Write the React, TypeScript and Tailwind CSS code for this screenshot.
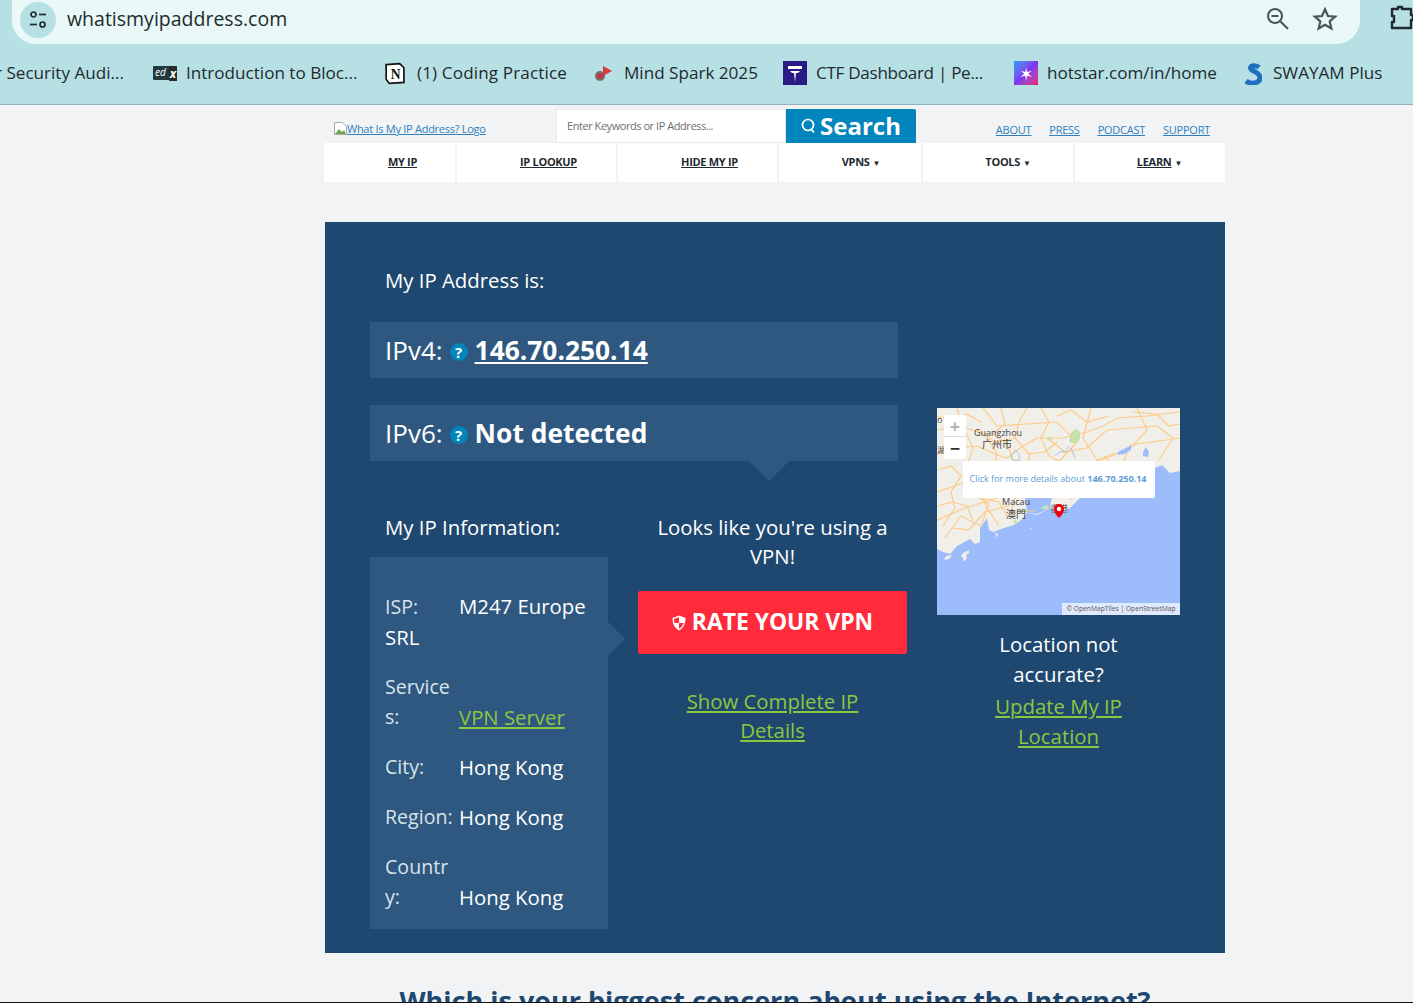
import React from "react";

function Bookmark({ icon, label, w, cls = "" }: { icon: React.ReactNode; label: string; w: string; cls?: string }) {
  return (
    <div className={`flex items-center shrink-0 ${w}`}>
      {icon}
      <span className={`text-[17.1px] leading-none text-[#1f2a30] whitespace-nowrap ${cls}`}>{label}</span>
    </div>
  );
}

function Q() {
  return (
    <span className="inline-flex items-center justify-center w-[18px] h-[18px] rounded-full bg-[#0285bd] text-white text-[15px] font-bold leading-none mt-[4px]">?</span>
  );
}

const roads = [
  "M0 46 L22 40 L40 38 L58 46 L70 50 L86 38 L100 30 L126 30 L150 24 L166 18 L180 10 L210 8 L243 4",
  "M20 0 L26 18 L36 40 L30 58 L30 70 L44 86 L50 100 L62 118",
  "M90 0 L82 14 L78 30 L92 46 L92 60 L80 84 L72 110",
  "M154 0 L146 30 L160 52 L150 88",
  "M0 84 L18 78 L38 70 L60 68 L80 66 L106 62 L130 60 L150 56 L170 50 L200 36 L243 30",
  "M0 112 L28 100 L60 90 L86 82 L120 78",
  "M200 0 L210 22 L190 44 L180 76",
  "M46 0 L60 18 L90 16 L120 14 L140 34 L116 60",
  "M0 22 L22 18 L48 26 L60 46 L56 62",
  "M8 130 L24 108 L44 118 L52 96 L40 88",
  "M110 30 L128 44 L150 40 L170 22 L220 18 L236 30 L222 52",
  "M64 0 L68 16 L56 26 L70 36 L76 52 L100 56",
  "M104 0 L112 14 L104 30 L112 48 L128 56",
  "M0 8 L14 12 L30 6 L44 14",
  "M0 62 L14 58 L24 68 L14 84 L18 100 L6 118",
  "M36 62 L46 74 L42 90 L62 94 L70 108",
  "M16 120 L32 122 L48 104 L72 98",
  "M120 8 L134 2 L150 14 L172 8",
  "M128 56 L136 68 L134 92",
  "M196 4 L220 6 L232 18 L243 16",
  "M168 48 L176 60 L196 58",
  "M0 98 L16 94 L30 98 L36 112",
  "M78 30 L58 34 L40 22",
  "M92 46 L108 44 L120 34",
  "M160 52 L176 46 L190 44",
];

function MapSvg() {
  return (
    <svg viewBox="0 0 243 207" className="w-[243px] h-[207px] block">
      <rect width="243" height="207" fill="#f1efe9" />
      <path d="M0 141 L6 144 L13 146 L20 138 L33 131 L38 136 L43 134 L43 120 L50 110 L52 122 L56 124 L67 120 L77 117 L84 112 L90 105 L100 107 L113 100 L125 103 L133 100 L145 88 L170 78 L200 66 L218 60 L225 57 L233 65 L243 63 L243 207 L0 207 Z" fill="#9cbcfb" />
      <path d="M88 88 L115 88 L113 100 L100 106 L90 105 Z" fill="#9cbcfb" />
      <g fill="none" stroke="#fdcb88" strokeWidth="1.2">
        {roads.map((d, i) => (
          <path key={i} d={d} />
        ))}
      </g>
      <path d="M78 42 q6 4 4 10 q-8 2 -8 -4 z" fill="none" stroke="#a8c4f0" strokeWidth="1" />
      <path d="M134 26 q6 -8 8 -2 q2 4 -1 9 q-6 4 -8 0 z" fill="#c5e5a8" stroke="#9ecf8a" strokeWidth="0.5" />
      <circle cx="113" cy="31" r="2" fill="#c5e5a8" />
      <path d="M118 48 q6 -6 10 -4 l4 -6 M134 40 l4 10" fill="none" stroke="#a8c4f0" strokeWidth="1" />
      <path d="M181 44 l10 -5 l3 -3 l0 6 l-7 4 l-6 1 z M206 44 l3 -5 l3 5 l-1 5 l-5 -1 z" fill="#9cbcfb" />
      <path d="M15 147 l-3 4 l-5 1 l2 -4 z M32 142 l-6 3 l-2 3 l2 2 l1 4 l3 -4 l-1 -3 l3 -2 z M60 130 l-2 -6 l3 2 z M93 121 l1 -1 l1 1 z" fill="#f1efe9" />
      <path d="M104 100 l5 -3 l3 2 l-2 3 z M76 113 l3 -2 l1 4 l-3 1 z" fill="#c9e5b0" />
      <path d="M80 103 h18" stroke="#d7c7a5" strokeWidth="1.5" />
      <text x="61" y="28" fontSize="9" fill="#444" textAnchor="middle" fontFamily="'Open Sans', sans-serif">Guangzhou</text>
      <text x="60" y="40" fontSize="10" fill="#444" textAnchor="middle" fontFamily="'Noto Sans CJK SC', sans-serif">广州市</text>
      <text x="0" y="15" fontSize="9" fill="#444" fontFamily="'Open Sans', sans-serif">o</text>
      <text x="0" y="45" fontSize="8" fill="#444" fontFamily="'Noto Sans CJK SC', sans-serif">湖</text>
      <text x="79" y="97" fontSize="9" fill="#444" textAnchor="middle" fontFamily="'Open Sans', sans-serif">Macau</text>
      <text x="79" y="110" fontSize="10" fill="#444" textAnchor="middle" fontFamily="'Noto Sans CJK SC', sans-serif">澳門</text>
      <text x="122" y="104" fontSize="9" fill="#666" textAnchor="middle" fontFamily="'Noto Sans CJK SC', sans-serif">香港</text>
      <path d="M122 110 c-7 -6 -6 -14 0 -14 c6 0 7 8 0 14 z" fill="#f0000c" />
      <circle cx="122" cy="101" r="2.2" fill="#fff" />
    </svg>
  );
}

const navItems: [string, string, string, boolean, boolean][] = [
  ["MY IP", "w-[133px]", "pl-[26px]", false, true],
  ["IP LOOKUP", "w-[161px]", "pl-[24px]", false, true],
  ["HIDE MY IP", "w-[161px]", "pl-[24px]", false, true],
  ["VPNS", "w-[144px]", "pl-[22px]", true, false],
  ["TOOLS", "w-[152px]", "pl-[20px]", true, false],
  ["LEARN", "w-[149px]", "pl-[20px]", true, true],
];

export default function App() {
  return (
    <div className="w-[1413px] h-[1003px] overflow-hidden bg-[#f1f3f5] font-['Open_Sans',sans-serif] flex flex-col border-b border-[#111]">
      {/* browser chrome */}
      <div className="h-[105px] shrink-0 bg-[#b7e0e4] border-b border-[#8fb3b8] relative">
        <div className="h-[44px] ml-[12px] w-[1348px] bg-[#eaf8f8] rounded-br-[24px] rounded-bl-[24px] flex items-center">
          <div className="w-[36px] h-[36px] ml-[8px] rounded-full bg-[#b7e0e4] flex items-center justify-center -mt-[4px] shrink-0">
            <svg width="20" height="20" viewBox="0 0 20 20" fill="none" stroke="#1f2a30" strokeWidth="1.7">
              <circle cx="5.5" cy="4.5" r="2.5" /><path d="M11 4.5h7" />
              <circle cx="14.5" cy="14.5" r="2.5" /><path d="M2 14.5h7" />
            </svg>
          </div>
          <span className="ml-[11px] text-[19.5px] leading-none text-[#1f2a30] -mt-[7px]">whatismyipaddress.com</span>
          <div className="ml-auto flex items-center -mt-[7px] mr-[22px] gap-[21px]">
            <svg width="27" height="27" viewBox="0 0 27 27" fill="none" stroke="#4a5357" strokeWidth="2">
              <circle cx="11" cy="11" r="7" /><path d="M16.5 16.5l7.5 7.5M7.5 11h7" />
            </svg>
            <svg width="26" height="26" viewBox="0 0 24 24" fill="none" stroke="#4a5357" strokeWidth="2" strokeLinejoin="miter">
              <path d="M12 3l2.7 6.2 6.7.6-5.1 4.4 1.6 6.6L12 17.3l-5.9 3.5 1.6-6.6-5.1-4.4 6.7-.6z" />
            </svg>
          </div>
        </div>
        <svg className="absolute left-[1389px] top-[4px]" width="24" height="27" viewBox="0 0 24 27" fill="none" stroke="#1f2a30" strokeWidth="2.4" strokeLinejoin="round">
          <path d="M3 5h6V3h4v2h9v6h2v5h-2v8H3v-6h2v-6H3z" />
        </svg>
        <div className="absolute left-0 top-[61px] h-[24px] w-[1413px] overflow-hidden">
          <div className="flex items-center h-full -ml-[5px]">
            <Bookmark w="w-[158px]" label="r Security Audi..." icon={null} />
            <Bookmark w="w-[230px]" label="Introduction to Bloc..." icon={
              <span className="relative w-[24px] h-[14px] mr-[9px] bg-[#1f3b40] text-white italic text-[10px] leading-[13px] pl-[2px] rounded-[1px]">ed<b className="absolute right-0 top-0 bg-[#2a2a2a] px-[1px] text-[12px] leading-[15px]">x</b></span>
            } />
            <Bookmark w="w-[210px]" cls="ml-[1px] tracking-[0.13px]" label="(1) Coding Practice" icon={
              <svg className="mr-[10px]" width="23" height="24" viewBox="0 0 22 22">
                <path d="M3 3l13-1 4 4v14l-14 1-3-4z" fill="#fff" stroke="#111" strokeWidth="1.6" />
                <text x="12" y="17" fontSize="13" fontWeight="700" textAnchor="middle" fontFamily="'Liberation Serif', serif" fill="#111">N</text>
              </svg>
            } />
            <Bookmark w="w-[190px]" label="Mind Spark 2025" icon={
              <svg className="mr-[10px]" width="21" height="20" viewBox="0 0 21 20">
                <circle cx="7" cy="13" r="5" fill="#7a6a6a" /><circle cx="7" cy="13" r="2.6" fill="#c9303a" />
                <path d="M10 3l9 5-9 5z" fill="#d9383f" />
              </svg>
            } />
            <Bookmark w="w-[231px]" cls="tracking-[-0.3px]" label="CTF Dashboard | Pe..." icon={
              <svg className="mr-[9px]" width="24" height="24" viewBox="0 0 24 24">
                <rect width="24" height="24" fill="#2b1a84" />
                <path d="M5 5h14v3H5zM7 10h10l-2 2h-2l-1 9-1-9H9z" fill="#fff" />
              </svg>
            } />
            <Bookmark w="w-[230px]" label="hotstar.com/in/home" icon={
              <span className="w-[24px] h-[24px] mr-[9px] bg-gradient-to-br from-[#0a9cf0] via-[#7a35f0] to-[#f0006e] flex items-center justify-center text-white text-[17px] leading-none">✶</span>
            } />
            <Bookmark w="w-[160px]" label="SWAYAM Plus" icon={
              <svg className="mr-[11px]" width="18" height="24" viewBox="0 0 18 24">
                <path d="M15 6.500C13 4.500 6.500 3.500 6.500 7c0 3.500 9.500 3.500 9.500 10 0 5-9 7-14 3" fill="none" stroke="#1f6fc0" strokeWidth="5" />
              </svg>
            } />
          </div>
        </div>
      </div>

      {/* page */}
      <div className="flex-1 pl-[325px] overflow-hidden">
        <div className="w-[900px]">
          <div className="h-[38px] flex items-start relative">
            <a className="mt-[16px] ml-[9px] text-[11px] leading-[15px] text-[#2f7fbf] underline whitespace-nowrap flex items-center tracking-[-0.27px]">
              <svg width="13" height="13" viewBox="0 0 13 13"><path d="M0.500 0.500h8l4 4v8h-12z" fill="#fff" stroke="#aaa" /><path d="M1 12l4-5 3 3 2-2 2 4z" fill="#6aa84f" /></svg>
              What Is My IP Address? Logo
            </a>
            <div className="absolute left-[231px] top-[4px] w-[230px] h-[34px] bg-white border border-[#e8eaec] flex items-center pl-[10px] text-[11px] text-[#6b7075] tracking-[-0.45px]">
              Enter Keywords or IP Address...
            </div>
            <div className="absolute left-[461px] top-[4px] w-[130px] h-[34px] bg-[#0285bd] rounded-tr-[2px] flex items-center justify-center text-white font-bold text-[24px] leading-none">
              <svg className="mr-[4px]" width="15" height="16" viewBox="0 0 15 16" fill="none" stroke="#fff" strokeWidth="1.7"><circle cx="7" cy="7" r="5.5" /><path d="M10.5 11.5l2.5 3" /></svg>
              Search
            </div>
            <div className="ml-auto mt-[17px] flex gap-[18px] text-[11px] leading-[15px] text-[#2f7fbf] underline tracking-[-0.25px] pr-[15px]">
              <a>ABOUT</a><a>PRESS</a><a>PODCAST</a><a>SUPPORT</a>
            </div>
          </div>
          <nav className="-ml-[1px] h-[39px] bg-white flex text-[11px] font-bold text-[#1f2a30] tracking-[-0.3px]">
            {navItems.map(([label, w, pad, caret, under], i) => (
              <div key={label} className={`${w} ${pad} flex items-center justify-center ${i < 5 ? "border-r-2 border-[#f1f3f5]" : ""}`}>
                <span className={under ? "underline" : ""}>{label}</span>
                {caret ? <span className="ml-[3px] text-[8px]">▼</span> : null}
              </div>
            ))}
          </nav>

          {/* panel */}
          <div className="mt-[40px] h-[731px] bg-[#1f4870] flex text-white">
            <div className="w-[573px] pl-[45px] shrink-0">
              <div className="pl-[15px] pt-[44px] text-[20.35px] leading-[28px]">My IP Address is:</div>
              <div className="mt-[28px] w-[528px] h-[56px] bg-[#2e587f] flex items-center pl-[15px] text-[26px] leading-none">
                <span>IPv4:</span>
                <span className="ml-[7px] mr-[7px] flex"><Q /></span>
                <a className="font-bold underline text-[26.35px]">146.70.250.14</a>
              </div>
              <div className="mt-[27px] w-[528px] h-[56px] bg-[#2e587f] flex items-center pl-[15px] text-[26px] leading-none relative">
                <span>IPv6:</span>
                <span className="ml-[7px] mr-[7px] flex"><Q /></span>
                <span className="font-bold text-[26.4px]">Not detected</span>
                <span className="absolute left-[379px] top-[56px] w-0 h-0 border-l-[20px] border-r-[20px] border-t-[20px] border-l-transparent border-r-transparent border-t-[#2e587f]"></span>
              </div>
              <div className="flex mt-[52px]">
                <div className="w-[238px] shrink-0">
                  <div className="pl-[15px] text-[20.35px] leading-[28px]">My IP Information:</div>
                  <div className="mt-[16px] w-[238px] h-[372px] bg-[#2e587f] relative pt-[33.5px] pl-[15px] text-[20.35px] leading-[30px]">
                    <span className="absolute left-[238px] top-[65px] w-0 h-0 border-t-[17px] border-b-[17px] border-l-[17px] border-t-transparent border-b-transparent border-l-[#2e587f]"></span>
                    <div className="w-[220px]">
                      <span className="text-[#d9e3ec] text-[19.6px] inline-block w-[74px]">ISP:</span>M247 Europe SRL
                    </div>
                    <div className="grid grid-cols-[74px_1fr] gap-y-[20px] mt-[20px] items-end">
                      <div className="text-[#d9e3ec] text-[19.6px] w-[68px] break-all">Services:</div>
                      <a className="text-[#8dc63f] underline">VPN Server</a>
                      <div className="text-[#d9e3ec] text-[19.6px]">City:</div>
                      <div>Hong Kong</div>
                      <div className="text-[#d9e3ec] text-[19.6px]">Region:</div>
                      <div>Hong Kong</div>
                      <div className="text-[#d9e3ec] text-[19.6px] w-[68px] break-all">Country:</div>
                      <div>Hong Kong</div>
                    </div>
                  </div>
                </div>
                <div className="ml-[30px] w-[269px] shrink-0 text-center">
                  <div className="text-[20.35px] leading-[29px]">Looks like you're using a VPN!</div>
                  <div className="mt-[20px] h-[63px] bg-[#ff2a3a] rounded-[2px] flex items-center justify-center font-bold text-[22.85px] leading-none">
                    <svg className="mr-[6px]" width="14" height="16" viewBox="0 0 14 16">
                      <path d="M7 0.5L13.5 3c0 6-2 10-6.5 12.5C2.500 13 0.5 9 0.500 3z" fill="#fff" />
                      <path d="M7 2.200V8H2.300C2.100 6.500 2 5 2 4zM7 8h4.700C11 10.500 9.500 12.400 7 13.800z" fill="#ff2a3a" />
                    </svg>
                    RATE YOUR VPN
                  </div>
                  <a className="block mt-[33px] text-[20.35px] leading-[29px] text-[#8dc63f] underline px-[20px]">Show Complete IP Details</a>
                </div>
              </div>
            </div>
            <div className="ml-[39px] mt-[186px] w-[243px] shrink-0 text-center">
              <div className="relative w-[243px] h-[207px]">
                <MapSvg />
                <div className="absolute left-[7px] top-[7px] w-[22px] h-[44px] bg-white rounded-[2px] flex flex-col items-center text-[18px] leading-[22px] font-bold">
                  <span className="h-[22px] text-[#b5b5b5] border-b border-[#ddd] w-full">+</span>
                  <span className="h-[22px] text-[#333]">−</span>
                </div>
                <div className="absolute left-[26px] top-[53px] w-[192px] h-[37px] bg-white rounded-[2px] flex items-center justify-center pb-[2px] pr-[2px] text-[9px] text-[#5b9bd5] whitespace-nowrap">
                  Click for more details about&nbsp;<b>146.70.250.14</b>
                </div>
                <div className="absolute right-0 bottom-0 h-[12px] w-[118px] bg-[#ffffffb0] text-[6.7px] leading-[12px] text-[#555] text-center whitespace-nowrap">© OpenMapTiles | OpenStreetMap</div>
              </div>
              <div className="mt-[14px] text-[20.35px] leading-[30px] px-[40px]">Location not accurate?</div>
              <a className="block mt-[2px] text-[20.35px] leading-[30px] text-[#8dc63f] underline px-[40px]">Update My IP Location</a>
            </div>
          </div>
          <div className="mt-[30px] text-center text-[27px] leading-[36px] font-bold text-[#1f4870] whitespace-nowrap">Which is your biggest concern about using the Internet?</div>
        </div>
      </div>
    </div>
  );
}
